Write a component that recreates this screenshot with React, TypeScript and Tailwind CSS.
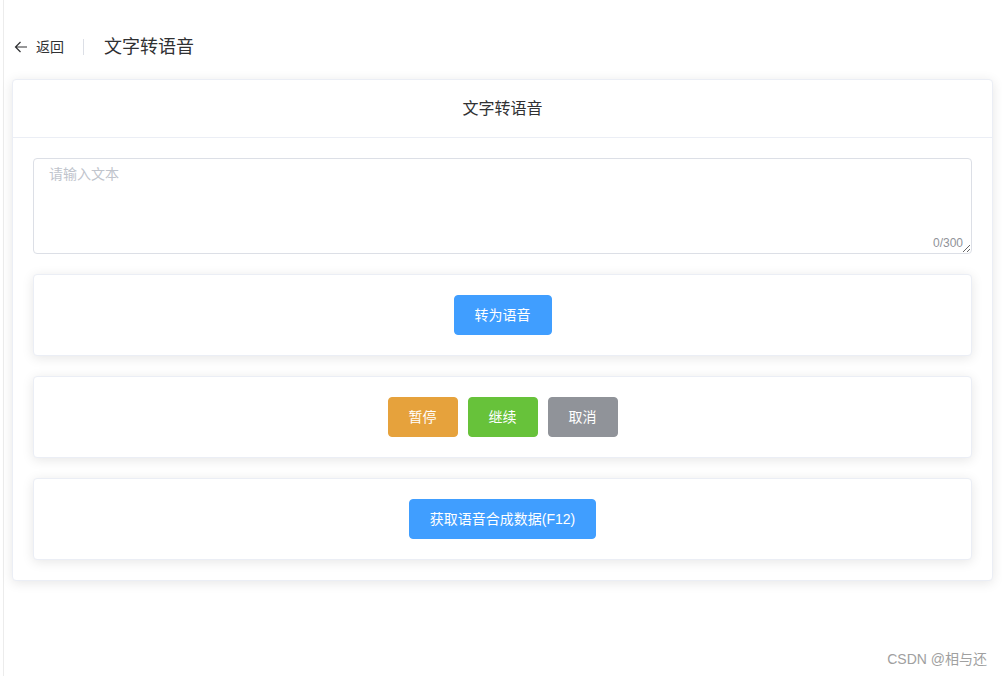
import React from "react";

const font = {
  fontFamily: '"Liberation Sans", "Noto Sans CJK SC", sans-serif',
};

type BtnProps = {
  color: string;
  children: React.ReactNode;
};

const Btn: React.FC<BtnProps> = ({ color, children }) => (
  <button
    className={`h-10 rounded-[4px] border px-5 text-sm leading-none text-white ${color}`}
  >
    {children}
  </button>
);

const InnerCard: React.FC<{ children: React.ReactNode }> = ({ children }) => (
  <div className="mt-5 flex items-center justify-center gap-[10px] rounded-[4px] border border-[#ebeef5] bg-white py-5 shadow-[0_2px_12px_0_rgba(0,0,0,0.1)]">
    {children}
  </div>
);

export default function App() {
  return (
    <div className="relative h-[676px] w-[1002px] overflow-hidden bg-white" style={font}>
      <div className="ml-[3px] h-full border-l border-[#ececec] pl-2 pr-2">
        {/* page header */}
        <div className="flex h-[79px] items-center pt-[15px]">
          <div className="flex items-center pl-[2px] text-sm text-[#303133]">
            <svg width="14" height="14" viewBox="0 0 14 14" fill="none" stroke="#303133" strokeWidth="1.2">
              <path d="M13 7H1.5M6.5 2L1.5 7l5 5" />
            </svg>
            <span className="ml-2">返回</span>
          </div>
          <div className="ml-[19px] mr-5 h-4 w-px bg-[#dcdfe6]" />
          <div className="text-lg text-[#303133]">文字转语音</div>
        </div>

        {/* outer card */}
        <div className="w-[981px] rounded-[4px] border border-[#ebeef5] bg-white shadow-[0_2px_12px_0_rgba(0,0,0,0.1)]">
          <div className="flex h-[58px] items-center justify-center border-b border-[#ebeef5] text-base text-[#303133]">
            文字转语音
          </div>
          <div className="p-5">
            <div className="relative">
              <textarea
                placeholder="请输入文本"
                className="block h-[96px] w-full resize-y rounded-[4px] border border-[#dcdfe6] px-[15px] py-[5px] text-sm leading-[1.5] text-[#606266] outline-none placeholder:text-[#c0c4cc]"
                style={font}
              />
              <span className="absolute bottom-[3px] right-[9px] bg-white text-xs text-[#909399]">
                0/300
              </span>
            </div>

            <InnerCard>
              <Btn color="border-[#409eff] bg-[#409eff]">转为语音</Btn>
            </InnerCard>

            <InnerCard>
              <Btn color="border-[#e6a23c] bg-[#e6a23c]">暂停</Btn>
              <Btn color="border-[#67c23a] bg-[#67c23a]">继续</Btn>
              <Btn color="border-[#909399] bg-[#909399]">取消</Btn>
            </InnerCard>

            <InnerCard>
              <Btn color="border-[#409eff] bg-[#409eff]">获取语音合成数据(F12)</Btn>
            </InnerCard>
          </div>
        </div>
      </div>

      <div className="absolute bottom-[7px] right-[15px] text-sm text-[#a0a0a0]">
        CSDN @相与还
      </div>
    </div>
  );
}
